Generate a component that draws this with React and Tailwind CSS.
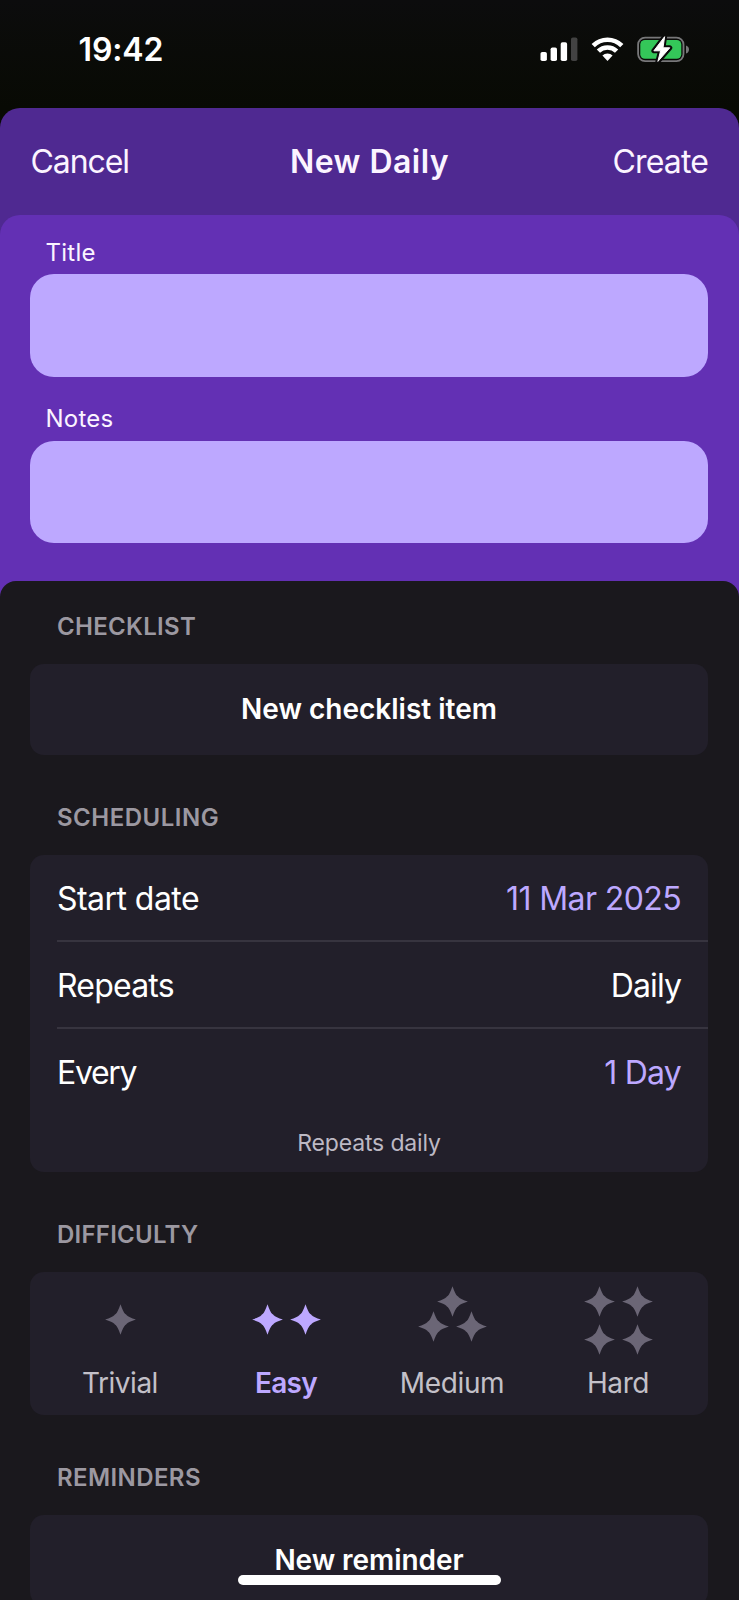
const STAR = 'M15.5 0.2C17.3 5.4 18.8 8.6 20.3 10C21 10.4 21.4 10.6 21.7 11.2C23 12.6 26 13.9 30.9 15.5C26 17.1 23 18.4 21.7 19.8C21.4 20.4 21 20.6 20.3 21C18.8 22.4 17.3 25.6 15.5 30.8C13.7 25.6 12.2 22.4 10.7 21C10 20.6 9.6 20.4 9.3 19.8C8 18.4 5 17.1 0.1 15.5C5 13.9 8 12.6 9.3 11.2C9.6 10.6 10 10.4 10.7 10C12.2 8.6 13.7 5.4 15.5 0.2Z';

const BOLT = 'M27.6 0.7L16.9 14.8H23.6L20.9 25.4L32.8 11.8H26Z';

function Stars({ points, width, height }) {
  return (
    <svg width={width} height={height} viewBox={`0 0 ${width} ${height}`} fill="currentColor">
      {points.map(([x, y]) => (
        <path key={`${x}-${y}`} d={STAR} transform={`translate(${x} ${y})`} />
      ))}
    </svg>
  );
}

const difficulties = [
  { label: 'Trivial', points: [[0, 0]], width: 31, height: 32, text: 'tracking-[-0.5px]' },
  { label: 'Easy', points: [[0, 0], [38, 0]], width: 69, height: 32, text: 'tracking-[-0.75px]', active: true },
  { label: 'Medium', points: [[19, 0], [0, 25], [38, 25]], width: 69, height: 69, text: 'tracking-[-0.35px]' },
  { label: 'Hard', points: [[0, 0], [38, 0], [0, 38], [38, 38]], width: 69, height: 69, text: 'tracking-[-0.4px]' },
];

function StatusBar() {
  return (
    <div className="flex h-[108px] items-start justify-between bg-linear-to-b from-[#0c0c0d] to-[#080a04] pl-[78.5px] pr-[48px] pt-[33px]">
      <span className="text-[32px] leading-[33px] font-semibold tracking-[-0.15px] text-white">19:42</span>
      <div className="flex items-center pt-[3px]">
        <svg width="38" height="25" viewBox="0 0 38 25" fill="#fff">
          <rect x="0.5" y="15" width="6.4" height="9" rx="1.8" />
          <rect x="10.6" y="10.5" width="6.4" height="13.5" rx="1.8" />
          <rect x="20.7" y="5.3" width="6.4" height="18.7" rx="1.8" />
          <rect x="31" y="0.4" width="6.4" height="23.6" rx="1.8" fill="#424242" />
        </svg>
        <svg className="ml-[13px]" width="33" height="25" viewBox="0 0 33 25" fill="none" stroke="#fff">
          <path d="M2.2 8.7A20.2 20.2 0 0 1 30.8 8.7" strokeWidth="4.6" />
          <path d="M7.4 14.2A12.9 12.9 0 0 1 25.6 14.2" strokeWidth="4.6" />
          <path d="M11.4 18.6A7 7 0 0 1 21.6 18.6L16.5 23.9Z" fill="#fff" stroke="none" />
        </svg>
        <svg className="ml-[13px]" width="54" height="27" viewBox="0 0 54 27" fill="none">
          <rect x="1.1" y="1.6" width="45.4" height="23.5" rx="7" stroke="#777779" strokeWidth="1.8" />
          <rect x="3.3" y="3.9" width="41" height="18.9" rx="4.6" fill="#34c759" />
          <path d="M49 9.4C51 10 52 11.6 52 13.4S51 16.9 49 17.5Z" fill="#777779" />
          <path d={BOLT} fill="#0b0b0b" stroke="#0b0b0b" strokeWidth="5" strokeLinejoin="round" />
          <path d={BOLT} fill="#fff" stroke="#fff" strokeWidth="1" strokeLinejoin="round" />
        </svg>
      </div>
    </div>
  );
}

function Section({ title, titleClass, className, children }) {
  return (
    <section className={className}>
      <h2 className={`pl-[27px] pt-px text-[24px] leading-[30px] font-semibold text-[#9c98a1] ${titleClass}`}>{title}</h2>
      {children}
    </section>
  );
}

function Row({ label, value, labelClass, valueClass }) {
  return (
    <div className="flex items-center justify-between text-[32px] leading-[40px]">
      <span className={`text-white ${labelClass}`}>{label}</span>
      <span className={valueClass}>{value}</span>
    </div>
  );
}

export default function App() {
  return (
    <div className="h-[1600px] w-[739px] overflow-hidden bg-[#080a04] font-['Inter',sans-serif]">
      <StatusBar />
      <div className="h-[1492px] rounded-t-[20px] bg-[#4f2991]">
        <header className="grid h-[106.5px] grid-cols-3 items-center pl-[30px] pr-[31px] pt-[2px] text-[32px] leading-[40px] text-[#fbf4ff]">
          <button className="pl-[0.5px] text-left tracking-[-1.1px]">Cancel</button>
          <h1 className="pl-px text-center font-semibold tracking-[0.45px]">New Daily</h1>
          <button className="text-right tracking-[-0.85px]">Create</button>
        </header>

        <div className="h-[1386px] rounded-t-[20px] bg-[#6330b4]">
          <div className="flex h-[366px] flex-col pl-[30px] pr-[31px] pt-[22px] text-[24px] leading-[32px] text-[#fbf4ff]">
            <label className="h-[37.5px] pl-[15.5px] tracking-[0.25px]">Title</label>
            <div className="h-[102.5px] rounded-[24px] bg-[#bda8ff]" />
            <label className="mt-[26px] h-[37.5px] pl-[15.5px] tracking-[0.25px]">Notes</label>
            <div className="mt-[0.5px] h-[102.5px] rounded-[24px] bg-[#bda8ff]" />
          </div>

          <main className="h-[1020px] rounded-t-[16px] bg-[#1a181d] pl-[30px] pr-[31px] pt-[30px]">
            <Section title="CHECKLIST" titleClass="tracking-[0.3px]">
              <button className="mt-[22px] flex h-[91.5px] w-full items-center justify-center rounded-[14px] bg-[#221f2a] text-[28px] font-semibold text-white">
                New checklist item
              </button>
            </Section>

            <Section title="SCHEDULING" className="mt-[47px]" titleClass="tracking-[0.5px]">
              <div className="mt-[22px] h-[317px] rounded-[14px] bg-[#221f2a] pl-[27px]">
                <div className="flex h-[87px] flex-col justify-center border-b-2 border-[#37343f] pt-[3px] pr-[27px]">
                  <Row label="Start date" value="11 Mar 2025" labelClass="tracking-[-0.55px]" valueClass="text-[#bda8ff] tracking-[-0.6px]" />
                </div>
                <div className="flex h-[87px] flex-col justify-center border-b-2 border-[#37343f] pt-[2px] pr-[27px]">
                  <Row label="Repeats" value="Daily" labelClass="tracking-[-0.8px]" valueClass="text-white tracking-[-0.9px]" />
                </div>
                <div className="flex h-[87px] flex-col justify-center pr-[27px]">
                  <Row label="Every" value="1 Day" labelClass="tracking-[-1.3px]" valueClass="text-[#bda8ff] tracking-[-0.75px]" />
                </div>
                <p className="mt-[12px] -ml-[27px] text-center text-[23px] leading-[30px] tracking-[-0.15px] text-[#bdb9c4]">Repeats daily</p>
              </div>
            </Section>

            <Section title="DIFFICULTY" className="mt-[47px]" titleClass="tracking-[0.25px]">
              <div className="mt-[22px] grid h-[142.5px] grid-cols-4 rounded-[14px] bg-[#221f2a] px-[7px]">
                {difficulties.map((d) => (
                  <button key={d.label} className="flex flex-col items-center pt-[2px]">
                    <span className={`flex h-[92px] items-center ${d.active ? 'text-[#bda8ff]' : 'text-[#6b6676]'}`}>
                      <Stars points={d.points} width={d.width} height={d.height} />
                    </span>
                    <span className={`text-[28px] leading-[34px] ${d.text} ${d.active ? 'font-semibold text-[#bda8ff]' : 'text-[#c3c0c8]'}`}>
                      {d.label}
                    </span>
                  </button>
                ))}
              </div>
            </Section>

            <Section title="REMINDERS" className="mt-[47px]" titleClass="tracking-[0.4px]">
              <button className="mt-[22px] flex h-[91.5px] w-full items-center justify-center rounded-[14px] bg-[#221f2a] text-[28px] font-semibold tracking-[-0.05px] text-white">
                New reminder
              </button>
            </Section>
          </main>
        </div>
      </div>
      <div className="absolute left-[238px] top-[1575px] h-[10px] w-[263px] rounded-full bg-white" />
    </div>
  );
}
